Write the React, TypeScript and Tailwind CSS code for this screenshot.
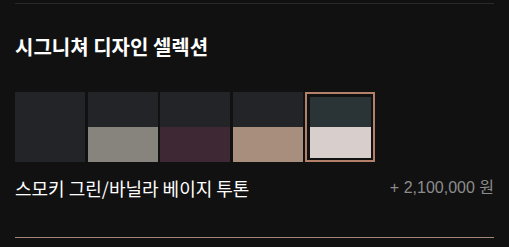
export default function App() {
  const swatches = [
    { top: "bg-[#222428]", bottom: "bg-[#222428]" },
    { top: "bg-[#222428]", bottom: "bg-[#87847e]" },
    { top: "bg-[#222428]", bottom: "bg-[#3d2833]" },
    { top: "bg-[#222428]", bottom: "bg-[#a88e7c]" },
  ];

  return (
    <div className="h-[247px] w-[509px] bg-[#111111] px-[15px] pt-[3px] font-['Noto_Sans_CJK_KR','Noto_Sans',sans-serif]">
      <div className="border-t border-[#2a2a2a]">
        <h2 className="mt-[29px] text-[20px] font-bold leading-[28px] text-white">
          시그니쳐 디자인 셀렉션
        </h2>

        <div className="mt-[31px] flex gap-[2.5px]">
          {swatches.map((s, i) => (
            <button key={i} className="flex h-[70px] w-[70px] flex-col">
              <div className={`h-[35px] ${s.top}`} />
              <div className={`h-[35px] ${s.bottom}`} />
            </button>
          ))}
          <button className="flex h-[70px] w-[70px] flex-col border-2 border-[#b3806a] bg-[#111111] p-[2.5px]">
            <div className="flex-1 bg-[#2a3436]" />
            <div className="flex-1 bg-[#d8cfcc]" />
          </button>
        </div>

        <div className="mt-[13px] flex items-center justify-between">
          <span className="text-[18px] leading-[26px] text-white">
            스모키 그린/바닐라 베이지 투톤
          </span>
          <span className="font-['Liberation_Sans','Noto_Sans_CJK_KR',sans-serif] text-[16px] leading-[26px] text-[#8c8c8c]">
            + 2,100,000 원
          </span>
        </div>

        <div className="mt-[36px] border-t border-[#a58676]" />
      </div>
    </div>
  );
}
